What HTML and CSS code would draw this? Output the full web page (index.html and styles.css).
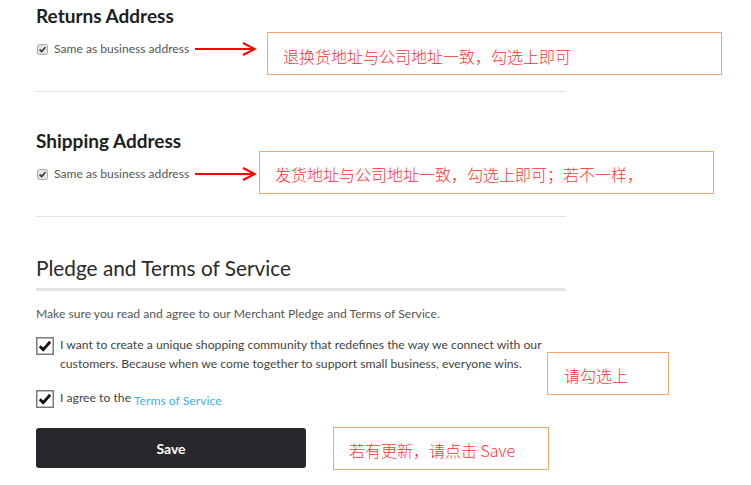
FILE: index.html
```html
<!DOCTYPE html>
<html lang="en">
<head>
  <meta charset="UTF-8">
  <title>Merchant Settings</title>
  <meta name="viewport" content="width=device-width, initial-scale=1.0">
  <link rel="stylesheet" href="styles.css">
</head>
<body>
  <div class="page">

    <section class="address">
      <h2>Returns Address</h2>
      <div class="same-row">
        <span class="mini-check">
          <svg width="11" height="11" viewBox="0 0 11 11"><rect x="0.5" y="0.5" width="10" height="10" rx="2" fill="#e4e4e4" stroke="#a8a8a8"/><path d="M2.6 5.6 L4.6 7.6 L8.4 3.2" fill="none" stroke="#333" stroke-width="1.6"/></svg>
        </span>
        <span class="same-label">Same as business address</span>
        <svg class="arrow" width="62" height="14" viewBox="0 0 62 14"><path d="M0 7 H60" stroke="#f00" stroke-width="2"/><path d="M48 1 L60 7 L48 13" fill="none" stroke="#f00" stroke-width="2"/></svg>
        <div class="note note-returns">退换货地址与公司地址一致，勾选上即可</div>
      </div>
    </section>

    <section class="address">
      <h2>Shipping Address</h2>
      <div class="same-row">
        <span class="mini-check">
          <svg width="11" height="11" viewBox="0 0 11 11"><rect x="0.5" y="0.5" width="10" height="10" rx="2" fill="#e4e4e4" stroke="#a8a8a8"/><path d="M2.6 5.6 L4.6 7.6 L8.4 3.2" fill="none" stroke="#333" stroke-width="1.6"/></svg>
        </span>
        <span class="same-label">Same as business address</span>
        <svg class="arrow" width="62" height="14" viewBox="0 0 62 14"><path d="M0 7 H60" stroke="#f00" stroke-width="2"/><path d="M48 1 L60 7 L48 13" fill="none" stroke="#f00" stroke-width="2"/></svg>
        <div class="note note-shipping">发货地址与公司地址一致，勾选上即可；若不一样，</div>
      </div>
    </section>

    <section class="pledge">
      <h3>Pledge and Terms of Service</h3>
      <p class="intro">Make sure you read and agree to our Merchant Pledge and Terms of Service.</p>

      <div class="agree-row">
        <span class="big-check">
          <svg width="18" height="18" viewBox="0 0 18 18"><rect x="0.75" y="0.75" width="16.5" height="16.5" fill="#fff" stroke="#7a7a7a" stroke-width="1.5"/><path d="M3.8 9.2 L7.2 12.6 L14.2 4.8" fill="none" stroke="#111" stroke-width="2.8"/></svg>
        </span>
        <span class="agree-text">I want to create a unique shopping community that redefines the way we connect with our customers. Because when we come together to support small business, everyone wins.</span>
        <div class="note note-check">请勾选上</div>
      </div>

      <div class="agree-row terms">
        <span class="big-check">
          <svg width="18" height="18" viewBox="0 0 18 18"><rect x="0.75" y="0.75" width="16.5" height="16.5" fill="#fff" stroke="#7a7a7a" stroke-width="1.5"/><path d="M3.8 9.2 L7.2 12.6 L14.2 4.8" fill="none" stroke="#111" stroke-width="2.8"/></svg>
        </span>
        <span class="agree-text">I agree to the <a class="tos" href="#">Terms of Service</a></span>
      </div>

      <div class="save-row">
        <button type="button" class="save">Save</button>
        <div class="note note-save">若有更新，请点击 Save</div>
      </div>
    </section>

  </div>
</body>
</html>
```

FILE: styles.css
```css
body {
  margin: 0;
  background-color: #fff;
  font-family: Lato, 'Open Sans', sans-serif;
  color: #555;
}
.page {
  padding: 4px 0 20px 36px;
  width: 530px;
}
.address {
  border-bottom: 1px solid #e3e3e3;
  height: 87px;
  margin-bottom: 37px;
}
.address h2 {
  margin: 0;
  font-size: 19px;
  line-height: 24px;
  font-weight: 700;
  color: #1e1e1e;
}
.same-row {
  position: relative;
  display: flex;
  align-items: center;
  height: 16px;
  margin-top: 12px;
}
.mini-check {
  display: flex;
  margin: 2px 6px 0 1px;
}
.same-label {
  font-size: 12.1px;
  color: #555;
}
.arrow {
  margin: 1px 0 0 6px;
}
.note {
  position: absolute;
  box-sizing: border-box;
  height: 43px;
  border: 1px solid #f4a56c;
  background: #fff;
  color: #ff3030;
  font-family: 'Noto Sans CJK SC', sans-serif;
  font-weight: 300;
  font-size: 16px;
  line-height: 37px;
  padding: 4px 0 0 15px;
  white-space: nowrap;
}
.note-returns {
  left: 231px;
  top: -8px;
  width: 455px;
  padding-top: 5px;
}
.note-shipping {
  left: 223px;
  top: -14px;
  width: 455px;
}
.pledge h3 {
  margin: 0;
  font-size: 20.8px;
  line-height: 28px;
  font-weight: 400;
  color: #2a2a2a;
  padding-bottom: 6px;
  border-bottom: 3px solid #e4e4e4;
}
.intro {
  margin: 14px 0 0;
  font-size: 12.15px;
  line-height: 18px;
  color: #555;
}
.agree-row {
  position: relative;
  display: flex;
  align-items: flex-start;
  margin-top: 14px;
}
.agree-row.terms {
  margin-top: 17px;
}
.big-check {
  display: flex;
  margin-right: 6px;
}
.agree-text {
  font-size: 12.2px;
  line-height: 19px;
  margin-top: -2px;
  color: #444;
}
.tos {
  color: #3cb1ee;
  text-decoration: none;
  position: relative;
  top: 3px;
}
.note-check {
  left: 511px;
  top: 15px;
  width: 122px;
  padding-left: 16px;
}
.save-row {
  position: relative;
  margin-top: 20px;
}
.save {
  display: block;
  width: 270px;
  height: 40px;
  border: none;
  border-radius: 3px;
  background-color: #28272c;
  color: #fff;
  font-family: Lato, sans-serif;
  font-weight: 700;
  font-size: 14px;
}
.note-save {
  left: 297px;
  top: -1px;
  width: 216px;
}
```
